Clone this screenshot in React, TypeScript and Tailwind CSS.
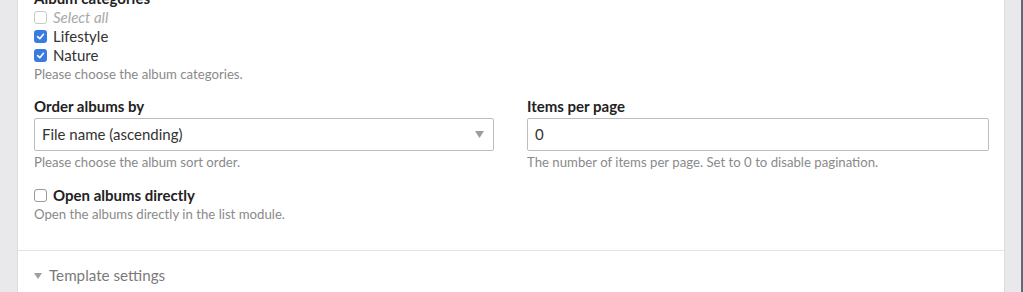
import React from 'react';

const Check: React.FC<{ checked?: boolean; muted?: boolean }> = ({ checked, muted }) =>
  checked ? (
    <span className="flex h-[13px] w-[13px] items-center justify-center rounded-[3px] bg-[#3a7be0]">
      <svg width="9" height="9" viewBox="0 0 10 10" fill="none">
        <path d="M1.8 5.2 L4.2 7.4 L8.3 2.6" stroke="white" strokeWidth="1.8" strokeLinecap="round" strokeLinejoin="round" />
      </svg>
    </span>
  ) : (
    <span
      className={`block h-[13px] w-[13px] rounded-[3px] border bg-white ${
        muted ? 'border-[#c8c8c8]' : 'border-[#9a9a9a]'
      }`}
    />
  );

const App: React.FC = () => {
  return (
    <div className="flex h-[292px] overflow-hidden bg-[#e9e9eb] text-[15px] text-[#333]" style={{ fontFamily: 'Lato, "Open Sans", sans-serif' }}>
      <div className="w-[17px] shrink-0" />
      <div className="w-[988px] shrink-0 border-x border-[#dcdcdc] bg-white">
        <div className="mt-[-11px] pl-4 pr-[15px]">
          <div className="text-[15px] font-bold leading-[19px] text-[#222]">Album categories</div>
          <label className="flex items-center gap-[6px] leading-[19px] italic text-[#a8a8a8]">
            <Check muted />
            Select all
          </label>
          <label className="flex items-center gap-[6px] leading-[19px]">
            <Check checked />
            Lifestyle
          </label>
          <label className="flex items-center gap-[6px] leading-[19px]">
            <Check checked />
            Nature
          </label>
          <p className="text-[13.2px] leading-[18px] text-[#8a8a8a]">Please choose the album categories.</p>

          <div className="mt-[14px] grid grid-cols-[460px_1fr] gap-[33px]">
            <div>
              <div className="mb-[2px] font-bold leading-[19px] text-[#222]">Order albums by</div>
              <div className="flex h-[33px] items-center justify-between rounded-[2px] border border-[#bdbdbd] pl-[7px] pr-[9px]">
                <span>File name (ascending)</span>
                <svg width="9" height="7" viewBox="0 0 9 7">
                  <path d="M0 0 H9 L4.5 7 Z" fill="#9c9c9c" />
                </svg>
              </div>
              <p className="mt-[2px] text-[13.2px] leading-[18px] text-[#8a8a8a]">Please choose the album sort order.</p>
            </div>
            <div>
              <div className="mb-[2px] font-bold leading-[19px] text-[#222]">Items per page</div>
              <div className="flex h-[33px] items-center rounded-[2px] border border-[#bdbdbd] px-[7px]">0</div>
              <p className="mt-[2px] text-[13.2px] leading-[18px] text-[#8a8a8a]">
                The number of items per page. Set to 0 to disable pagination.
              </p>
            </div>
          </div>

          <label className="mt-[15px] flex items-center gap-[6px] font-bold leading-[19px] text-[#222]">
            <Check />
            Open albums directly
          </label>
          <p className="text-[13.2px] leading-[18px] text-[#8a8a8a]">Open the albums directly in the list module.</p>
        </div>

        <div className="mt-[27px] border-t border-[#e4e4e4]" />
        <div className="flex items-center gap-[7px] pl-4 pt-[15px] text-[15.2px] leading-[19px] text-[#7a7a7a]">
          <svg width="8" height="6" viewBox="0 0 8 6">
            <path d="M0 0 H8 L4 6 Z" fill="#a0a0a0" />
          </svg>
          Template settings
        </div>
      </div>
      <div className="flex-1" />
      <div className="w-[2px] bg-[#5d6b78]" />
    </div>
  );
};

export default App;
